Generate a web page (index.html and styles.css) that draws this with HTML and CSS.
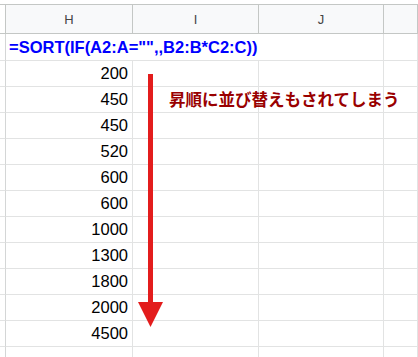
FILE: index.html
```html
<!DOCTYPE html>
<html lang="ja">
<head>
    <meta charset="UTF-8">
    <meta name="viewport" content="width=device-width, initial-scale=1.0">
    <title>SORT</title>
    <link rel="stylesheet" href="styles.css">
</head>
<body>

<div class="sheet">
    <div class="col-head stub"></div>
    <div class="col-head">H</div>
    <div class="col-head">I</div>
    <div class="col-head">J</div>
    <div class="col-head"></div>

    <div class="cell stub"></div>
    <div class="cell formula">=SORT(IF(A2:A="",,B2:B*C2:C))</div>
    <div class="cell"></div>
</div>

<!-- annotation overlay -->
<svg class="arrow" width="418" height="357" viewBox="0 0 418 357">
    <rect x="148" y="74" width="5" height="232" fill="#e31c1c"/>
    <polygon points="138,302 163,302 150.5,327" fill="#e31c1c"/>
</svg>
<p class="note">昇順に並び替えもされてしまう</p>

<script>
    // sorted values in column H
    const values = [200, 450, 450, 520, 600, 600, 1000, 1300, 1800, 2000, 4500, ""];
    const sheet = document.querySelector('.sheet');

    values.forEach(function (v) {
        const row = ['stub', 'num', '', '', ''];
        row.forEach(function (cls, i) {
            const cell = document.createElement('div');
            cell.className = 'cell ' + cls;
            if (i === 1) cell.textContent = v;
            sheet.appendChild(cell);
        });
    });
</script>

</body>
</html>
```

FILE: styles.css
```css
body {
    margin: 0;
    background: #fff;
    font-family: "Liberation Sans", Arial, sans-serif;
    overflow: hidden;
}
.sheet {
    display: grid;
    grid-template-columns: 6px 127px 126px 125px 1fr;
    grid-auto-rows: 26px;
    grid-template-rows: 30px 27px;
    margin-top: 4px;
}
.col-head {
    background: #f8f9fa;
    border-top: 1px solid #c4c7c5;
    border-right: 1px solid #c4c7c5;
    border-bottom: 1px solid #c4c7c5;
    color: #444;
    font-size: 13px;
    display: flex;
    align-items: center;
    justify-content: center;
}
.col-head.stub {
    background: #fff;
}
.cell {
    border-right: 1px solid #e2e3e3;
    border-bottom: 1px solid #e2e3e3;
    display: flex;
    align-items: flex-end;
    padding: 0 4px 3px 3px;
    font-size: 16.5px;
    line-height: 19px;
    color: #000;
    white-space: nowrap;
}
.cell.stub {
    padding: 0;
    border-right-color: #d4d6d6;
}
.formula {
    grid-column: span 3;
    color: #0000ff;
    font-weight: bold;
}
.num {
    justify-content: flex-end;
}
.arrow {
    position: absolute;
    left: 0;
    top: 0;
}
.note {
    position: absolute;
    left: 169px;
    top: 91px;
    margin: 0;
    font-family: "Noto Sans CJK JP", sans-serif;
    font-weight: bold;
    font-size: 16.5px;
    line-height: 1;
    color: #990000;
}
```
